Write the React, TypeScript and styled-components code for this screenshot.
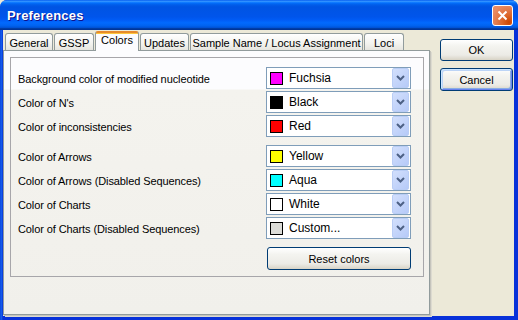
import * as React from 'react';
import styled, { createGlobalStyle } from 'styled-components';

const GlobalStyle = createGlobalStyle`
  html, body {
    margin: 0;
    padding: 0;
    background: #ece9d8;
  }
  body {
    font-family: 'Liberation Sans', Arial, sans-serif;
    font-size: 11px;
    color: #000;
  }
`;

type ColorOption = { label: string; value: string; swatch: string };

const groups: ColorOption[][] = [
  [
    { label: 'Background color of modified nucleotide', value: 'Fuchsia', swatch: '#ff00ff' },
    { label: "Color of N's", value: 'Black', swatch: '#000000' },
    { label: 'Color of inconsistencies', value: 'Red', swatch: '#ff0000' },
  ],
  [
    { label: 'Color of Arrows', value: 'Yellow', swatch: '#ffff00' },
    { label: 'Color of Arrows (Disabled Sequences)', value: 'Aqua', swatch: '#00ffff' },
    { label: 'Color of Charts', value: 'White', swatch: '#ffffff' },
    { label: 'Color of Charts (Disabled Sequences)', value: 'Custom...', swatch: '#dcdcd8' },
  ],
];

const tabs = [
  { name: 'General', w: 48 },
  { name: 'GSSP', w: 40 },
  { name: 'Colors', w: 44 },
  { name: 'Updates', w: 49 },
  { name: 'Sample Name / Locus Assignment', w: 173 },
  { name: 'Loci', w: 40 },
];

const Window = styled.div`
  width: 518px;
  height: 320px;
  box-sizing: border-box;
  display: flex;
  flex-direction: column;
  background: linear-gradient(to right, #0831d9 0, #166aee 1px, #0831d9 3px);
  border-radius: 7px 7px 0 0;
  overflow: hidden;
`;

const TitleBar = styled.div`
  height: 30px;
  flex: none;
  display: flex;
  align-items: center;
  justify-content: space-between;
  padding: 0 5px 0 7px;
  box-sizing: border-box;
  background: linear-gradient(
    #0058ee 0%,
    #3593ff 4%,
    #288eff 6%,
    #127dff 8%,
    #036ffc 10%,
    #0262ee 14%,
    #0057e5 20%,
    #0054e3 24%,
    #0055eb 56%,
    #005bf5 66%,
    #026afe 76%,
    #0062ef 86%,
    #0052d6 92%,
    #0040ab 94%,
    #003092 100%
  );
`;

const Title = styled.span`
  font-family: 'Liberation Sans', Arial, sans-serif;
  font-weight: bold;
  font-size: 13px;
  color: #fff;
  text-shadow: 1px 1px #0f1089;
  letter-spacing: 0.2px;
  margin-top: 1px;
`;

const CloseButton = styled.div`
  width: 21px;
  height: 21px;
  box-sizing: border-box;
  border: 1px solid #fff;
  border-radius: 3px;
  background: radial-gradient(circle at 85% 85%, #cc4600 0%, #dc6527 30%, #e27a4a 55%, #e98b65 80%);
  display: flex;
  align-items: center;
  justify-content: center;
  margin-top: 1px;
`;

const Client = styled.div`
  flex: 1;
  display: flex;
  margin: 0 4px 4px 3px;
  background: #ece9d8;
`;

const TabControl = styled.div`
  width: 427px;
  display: flex;
  flex-direction: column;
`;

const TabStrip = styled.div`
  height: 20px;
  display: flex;
  align-items: flex-end;
  gap: 1px;
  padding-left: 2px;
  position: relative;
  z-index: 1;
`;

const Tab = styled.div<{ $w: number; $active?: boolean }>`
  width: ${p => p.$w}px;
  height: ${p => (p.$active ? 20 : 17)}px;
  box-sizing: border-box;
  display: flex;
  align-items: center;
  justify-content: center;
  border: 1px solid #919b9c;
  border-bottom: none;
  border-radius: 3px 3px 0 0;
  background: ${p =>
    p.$active
      ? 'linear-gradient(#e68b2c 0, #e68b2c 1px, #ffc73c 1px, #ffc73c 2px, #fcfcfe 2px, #fcfcfe 100%)'
      : 'linear-gradient(#ffffff, #f3f3ef 60%, #e6e5df)'};
  border-top-color: ${p => (p.$active ? '#e68b2c' : '#919b9c')};
  padding-top: ${p => (p.$active ? 0 : 1)}px;
  padding-bottom: ${p => (p.$active ? 3 : 0)}px;
  margin-bottom: ${p => (p.$active ? -1 : 0)}px;
  white-space: nowrap;
`;

const TabPage = styled.div`
  height: 265px;
  box-sizing: border-box;
  border: 1px solid #919b9c;
  box-shadow: 1px 1px 0 #c5c4bc, 2px 2px 0 #dcdad0;
  background: linear-gradient(#fcfcfe 0, #fcfcfe 38px, #f4f3ee 39px, #f1f0eb 100%);
  padding: 6px 5px 0 6px;
`;

const Group = styled.div`
  border: 1px solid #a7a6aa;
  padding: 9px 12px 6px 7px;
  display: flex;
  flex-direction: column;
  gap: 8px;
`;

const RowGroup = styled.div`
  display: grid;
  grid-template-columns: 1fr 145px;
  row-gap: 2px;
  align-items: center;
`;

const Label = styled.span`
  white-space: nowrap;
  letter-spacing: -0.1px;
  padding-top: 2px;
`;

const Combo = styled.div`
  height: 22px;
  box-sizing: border-box;
  border: 1px solid #7f9db9;
  background: #fff;
  display: flex;
  align-items: center;
  padding: 0 1px 0 3px;
`;

const Swatch = styled.span<{ $color: string }>`
  width: 13px;
  height: 13px;
  box-sizing: border-box;
  border: 1px solid #000;
  background: ${p => p.$color};
  margin-right: 6px;
  flex: none;
`;

const ComboText = styled.span`
  flex: 1;
  font-size: 12px;
`;

const DropButton = styled.span`
  width: 17px;
  height: 20px;
  box-sizing: border-box;
  border: 1px solid #b9cdf5;
  border-radius: 2px;
  background: linear-gradient(135deg, #d2dffc, #b6caf8);
  display: flex;
  align-items: center;
  justify-content: center;
`;

const ButtonRow = styled.div`
  display: flex;
  justify-content: flex-end;
`;

const PushButton = styled.button<{ $w: number; $h: number; $focused?: boolean }>`
  width: ${p => p.$w}px;
  height: ${p => p.$h}px;
  box-sizing: border-box;
  border: 1px solid #003c74;
  border-radius: 3px;
  background: linear-gradient(#ffffff 0%, #f4f4f0 30%, #ecebe6 75%, #d8d3c6 100%);
  box-shadow: ${p => (p.$focused ? 'inset 1px 1px #cee7ff, inset -1px -1px #6982ee, inset 2px 2px #bcd4f6, inset -2px -2px #89ade4' : 'none')};
  font-family: 'Liberation Sans', Arial, sans-serif;
  font-size: 11px;
  color: #000;
  padding: 0;
`;

const SideButtons = styled.div`
  margin: 9px 0 0 10px;
  display: flex;
  flex-direction: column;
  gap: 7px;
`;

function Chevron() {
  return (
    <svg width="9" height="6" viewBox="0 0 9 6">
      <path d="M1 1 L4.5 4.5 L8 1" fill="none" stroke="#4d6185" strokeWidth="2" />
    </svg>
  );
}

export default function App(): JSX.Element {
  return (
    <>
      <GlobalStyle />
      <Window>
        <TitleBar>
          <Title>Preferences</Title>
          <CloseButton>
            <svg width="11" height="11" viewBox="0 0 11 11">
              <path d="M1.5 1.5 L9.5 9.5 M9.5 1.5 L1.5 9.5" stroke="#fff" strokeWidth="2" />
            </svg>
          </CloseButton>
        </TitleBar>
        <Client>
          <TabControl>
            <TabStrip>
              {tabs.map(t => (
                <Tab key={t.name} $w={t.w} $active={t.name === 'Colors'}>
                  {t.name}
                </Tab>
              ))}
            </TabStrip>
            <TabPage>
              <Group>
                {groups.map((g, i) => (
                  <RowGroup key={i}>
                    {g.map(opt => (
                      <React.Fragment key={opt.label}>
                        <Label>{opt.label}</Label>
                        <Combo>
                          <Swatch $color={opt.swatch} />
                          <ComboText>{opt.value}</ComboText>
                          <DropButton>
                            <Chevron />
                          </DropButton>
                        </Combo>
                      </React.Fragment>
                    ))}
                  </RowGroup>
                ))}
                <ButtonRow>
                  <PushButton $w={144} $h={23}>Reset colors</PushButton>
                </ButtonRow>
              </Group>
            </TabPage>
          </TabControl>
          <SideButtons>
            <PushButton $w={73} $h={22}>OK</PushButton>
            <PushButton $w={73} $h={23} $focused>Cancel</PushButton>
          </SideButtons>
        </Client>
      </Window>
    </>
  );
}
